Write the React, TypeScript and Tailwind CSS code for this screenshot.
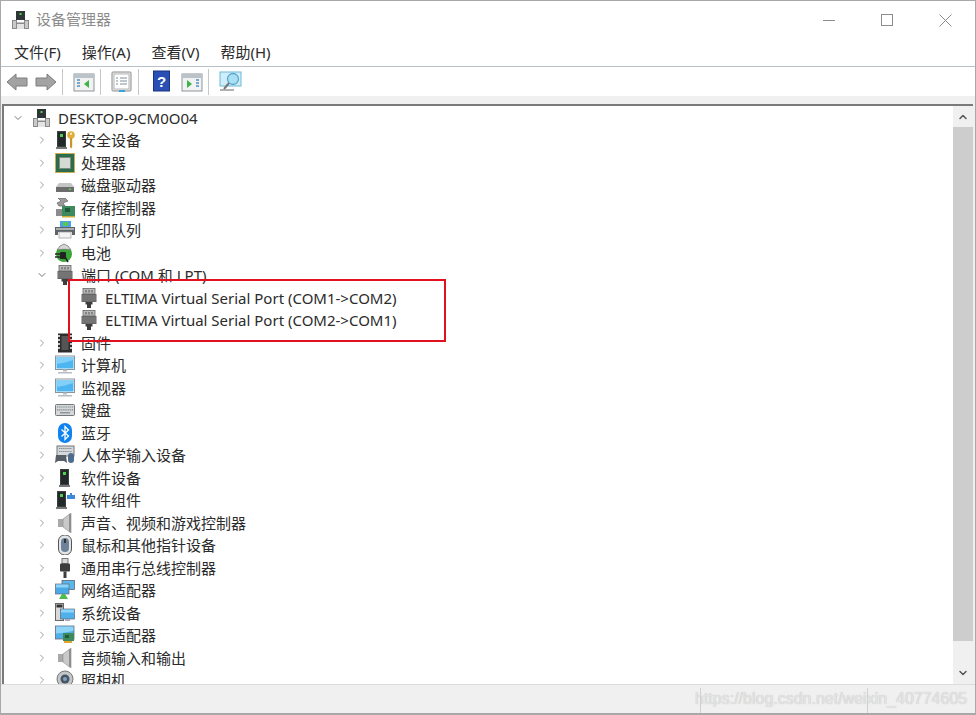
import { ChevronDown, ChevronRight } from "lucide-react";
import type { ReactNode } from "react";

const Svg = ({ children }: { children: ReactNode }) => (
  <svg width="20" height="20" viewBox="0 0 20 20" className="shrink-0">
    {children}
  </svg>
);

const TowerIcon = ({ extra }: { extra?: "key" | "puzzle" }) => {
  const x = extra ? 2 : 5;
  return (
    <Svg>
      <rect x={x} y="1" width="9" height="16" fill="#3a3f42" />
      <rect x={x + 1} y="2" width="7" height="14" fill="#23282b" />
      <rect x={x + 3} y="4" width="3" height="3" fill="#4fd14f" />
      <path d={`M${x - 1} 17h11v2H${x - 1}z`} fill="#777" />
      {extra === "key" && (
        <g>
          <circle cx="16" cy="5" r="3.8" fill="#e0ad3a" />
          <circle cx="16" cy="3.8" r="1.1" fill="#fff5d0" />
          <path d="M15 8h2.2v9l-1.1 1.5-1.1-1.5z" fill="#c9942b" />
        </g>
      )}
      {extra === "puzzle" && <path d="M12 5h3V3h2v2h3v4h-8z" fill="#3b8ad9" />}
    </Svg>
  );
};

const RootIcon = () => (
  <Svg>
    <rect x="6" y="1" width="9" height="9" fill="#2f3437" />
    <rect x="9.5" y="3" width="2" height="2" fill="#4fd14f" />
    <path d="M2 10h5v2.5h7V10h5v9H2z" fill="#8a8a8a" />
    <rect x="3" y="11" width="3" height="7" fill="#c9c9c9" />
    <rect x="15" y="11" width="3" height="7" fill="#c9c9c9" />
    <rect x="7" y="14" width="7" height="5" fill="#e4e4e4" />
  </Svg>
);

const CpuIcon = () => (
  <Svg>
    <rect x="0" y="0" width="20" height="20" fill="#c9b057" />
    <rect x="1" y="1" width="18" height="18" fill="#2e6b4a" />
    <rect x="4.5" y="4.5" width="11" height="11" fill="#d5dad2" stroke="#7a8a80" />
  </Svg>
);

const DiskIcon = () => (
  <Svg>
    <path d="M4 8h12l3 4H1z" fill="#c4c4c4" />
    <rect x="1" y="12" width="18" height="5" fill="#6c6c6c" />
    <rect x="14" y="13.5" width="2" height="1.5" fill="#55d455" />
  </Svg>
);

const StorageIcon = () => (
  <Svg>
    <path d="M3 0h7l3 3-5 2 2 3H4L2 5l4-2z" fill="#9a9a9a" stroke="#555" strokeWidth="0.6" />
    <rect x="1" y="11" width="11" height="7" fill="#8c8c8c" />
    <rect x="7" y="8" width="13" height="10" fill="#3f8a5d" />
    <rect x="10" y="10" width="5" height="4" fill="#1f5a3a" />
    <path d="M7 18h13v1.5H7z" fill="#d1ad41" />
  </Svg>
);

const PrinterIcon = () => (
  <Svg>
    <rect x="5" y="1" width="11" height="6" fill="#4aa3e0" />
    <rect x="8" y="2" width="5" height="4" fill="#5bc45b" />
    <path d="M0 7h20v8h-3v-3H3v3H0z" fill="#5d6468" />
    <rect x="1" y="8" width="18" height="2" fill="#a8adb0" />
    <rect x="4" y="12" width="12" height="6" fill="#f4f4f4" stroke="#999" strokeWidth="0.7" />
  </Svg>
);

const BatteryIcon = () => (
  <Svg>
    <circle cx="9" cy="11" r="8" fill="#3aa63a" />
    <path d="M2 7l3-4 4-2 4 2 3 4c-4-1-10-1-14 0z" fill="#d4d6d4" stroke="#6f6f6f" strokeWidth="0.7" />
    <path d="M0 11h6M0 14h6" stroke="#2a2a2a" strokeWidth="1.5" />
    <rect x="5" y="9" width="6" height="7" rx="1" fill="#222" />
    <path d="M10 14l3 5" stroke="#222" strokeWidth="1.5" />
  </Svg>
);

const PortIcon = () => (
  <Svg>
    <rect x="4" y="0.5" width="12" height="5.5" fill="#b8b8b8" stroke="#666" strokeWidth="0.8" />
    <path d="M7 2v2.5M10 2v2.5M13 2v2.5" stroke="#555" />
    <rect x="2.5" y="6" width="15" height="8" fill="#666" />
    <path d="M3 8h14M3 10h14M3 12h14" stroke="#8a8a8a" strokeWidth="0.8" />
    <path d="M6.5 14h7v2.5h-1.5V20H8v-3.5H6.5z" fill="#3d3d3d" />
  </Svg>
);

const FirmwareIcon = () => (
  <Svg>
    <rect x="3" y="0.5" width="14" height="19" fill="#2d2d2d" />
    <path d="M3 2h2v2H3zM3 6h2v2H3zM3 10h2v2H3zM3 14h2v2H3zM15 2h2v2h-2zM15 6h2v2h-2zM15 10h2v2h-2zM15 14h2v2h-2z" fill="#c7c7c7" />
    <rect x="6.5" y="3" width="7" height="14" fill="#555" />
  </Svg>
);

const MonitorIcon = () => (
  <Svg>
    <rect x="0.5" y="1" width="19" height="13.5" fill="#fff" stroke="#8a949c" />
    <rect x="1.5" y="2" width="17" height="11.5" fill="#4db6f0" />
    <path d="M1.5 2h17v3c-6 2-11 3-17 4z" fill="#82cff7" />
    <path d="M8 14.5h4v2H8zM3 17h14v1.5H3z" fill="#b7bdc2" />
  </Svg>
);

const KeyboardIcon = () => (
  <Svg>
    <rect x="0.5" y="4.5" width="19" height="11" rx="1" fill="#d5d8da" stroke="#777" />
    <path d="M2 7h16M2 9.8h16" stroke="#7d858a" strokeWidth="1.2" strokeDasharray="1.3 0.8" />
    <path d="M5 12.8h10" stroke="#7d858a" strokeWidth="1.2" />
  </Svg>
);

const BluetoothIcon = () => (
  <Svg>
    <rect x="3" y="0" width="14" height="20" rx="7" fill="#0f83f0" />
    <path d="M6.5 6.5l7 6.5-3.5 3.5V3.5L13.5 7l-7 6.5" fill="none" stroke="#fff" strokeWidth="1.3" />
  </Svg>
);

const HidIcon = () => (
  <Svg>
    <rect x="2" y="1" width="17" height="10" fill="#d5d8da" stroke="#777" />
    <path d="M4 3.5h13M4 6.5h13" stroke="#7d858a" strokeDasharray="1.3 0.8" />
    <path d="M0 18l1-8h10l1 8-3-2H3z" fill="#555d66" />
    <rect x="13" y="8" width="6" height="10" rx="3" fill="#4d6d8f" />
  </Svg>
);

const SpeakerIcon = () => (
  <Svg>
    <path d="M3 6h5v8H3z" fill="#a9a9a9" />
    <path d="M8 6l8-6v20l-8-6z" fill="#c9c9c9" stroke="#8a8a8a" strokeWidth="0.6" />
    <path d="M14 1h2v18h-2z" fill="#8f8f8f" />
  </Svg>
);

const MouseIcon = () => (
  <Svg>
    <rect x="3.5" y="0" width="13" height="20" rx="6" fill="#e2e4e6" stroke="#555" />
    <rect x="6" y="3" width="8" height="14" rx="4" fill="#6d8299" />
    <rect x="9" y="4" width="2" height="4" fill="#333" />
  </Svg>
);

const UsbIcon = () => (
  <Svg>
    <rect x="7" y="0.5" width="6" height="5" fill="#d9d9d9" stroke="#777" />
    <rect x="5" y="5.5" width="10" height="8" rx="1" fill="#3d3d3d" />
    <path d="M10 13.5V20" stroke="#3d3d3d" strokeWidth="3" />
  </Svg>
);

const NetworkIcon = () => (
  <Svg>
    <rect x="7" y="0.5" width="12.5" height="9" fill="#5ab5ea" stroke="#556" strokeWidth="0.7" />
    <rect x="0.5" y="4" width="13.5" height="10" fill="#49a9e6" stroke="#667" strokeWidth="0.7" />
    <path d="M1 4.5h12.5v3H1z" fill="#8fd4f7" />
    <path d="M4 19l3-5h3l3 5z" fill="#4dbb4d" />
  </Svg>
);

const SystemIcon = () => (
  <Svg>
    <rect x="0.5" y="0.5" width="8" height="17" fill="#d9d9d9" stroke="#666" />
    <rect x="1.5" y="1.5" width="6" height="3" fill="#333" />
    <rect x="5.5" y="6" width="14" height="10" fill="#4fb0ea" stroke="#667" strokeWidth="0.7" />
    <path d="M6 6.5h13v3H6z" fill="#8fd4f7" />
    <rect x="10" y="16" width="5" height="2" fill="#aab" />
  </Svg>
);

const DisplayAdapterIcon = () => (
  <Svg>
    <rect x="0.5" y="1" width="18.5" height="13" fill="#4fb0ea" stroke="#667" strokeWidth="0.8" />
    <path d="M1 1.5h17.5v4c-6 2-10 2-17.5 3z" fill="#8fd4f7" />
    <rect x="8" y="8" width="11" height="8" fill="#3f8a5d" />
    <rect x="10" y="10" width="4" height="3" fill="#1f5a3a" />
    <rect x="9" y="16" width="8" height="2" fill="#e3a52c" />
  </Svg>
);

const CameraIcon = () => (
  <Svg>
    <circle cx="10" cy="9" r="8" fill="#c4c7ca" stroke="#777" />
    <circle cx="10" cy="9" r="4.5" fill="#4a5560" />
    <circle cx="10" cy="9" r="2" fill="#7ea2c4" />
  </Svg>
);

type TreeRow = { label: string; icon: ReactNode; level: 0 | 1 | 2; open?: boolean; leaf?: boolean };

const rows: TreeRow[] = [
  { label: "DESKTOP-9CM0O04", icon: <RootIcon />, level: 0, open: true },
  { label: "安全设备", icon: <TowerIcon extra="key" />, level: 1 },
  { label: "处理器", icon: <CpuIcon />, level: 1 },
  { label: "磁盘驱动器", icon: <DiskIcon />, level: 1 },
  { label: "存储控制器", icon: <StorageIcon />, level: 1 },
  { label: "打印队列", icon: <PrinterIcon />, level: 1 },
  { label: "电池", icon: <BatteryIcon />, level: 1 },
  { label: "端口 (COM 和 LPT)", icon: <PortIcon />, level: 1, open: true },
  { label: "ELTIMA Virtual Serial Port (COM1->COM2)", icon: <PortIcon />, level: 2, leaf: true },
  { label: "ELTIMA Virtual Serial Port (COM2->COM1)", icon: <PortIcon />, level: 2, leaf: true },
  { label: "固件", icon: <FirmwareIcon />, level: 1 },
  { label: "计算机", icon: <MonitorIcon />, level: 1 },
  { label: "监视器", icon: <MonitorIcon />, level: 1 },
  { label: "键盘", icon: <KeyboardIcon />, level: 1 },
  { label: "蓝牙", icon: <BluetoothIcon />, level: 1 },
  { label: "人体学输入设备", icon: <HidIcon />, level: 1 },
  { label: "软件设备", icon: <TowerIcon />, level: 1 },
  { label: "软件组件", icon: <TowerIcon extra="puzzle" />, level: 1 },
  { label: "声音、视频和游戏控制器", icon: <SpeakerIcon />, level: 1 },
  { label: "鼠标和其他指针设备", icon: <MouseIcon />, level: 1 },
  { label: "通用串行总线控制器", icon: <UsbIcon />, level: 1 },
  { label: "网络适配器", icon: <NetworkIcon />, level: 1 },
  { label: "系统设备", icon: <SystemIcon />, level: 1 },
  { label: "显示适配器", icon: <DisplayAdapterIcon />, level: 1 },
  { label: "音频输入和输出", icon: <SpeakerIcon />, level: 1 },
  { label: "照相机", icon: <CameraIcon />, level: 1 },
];

const levelPad = { 0: "pl-[7px]", 1: "pl-[31px]", 2: "pl-[55px]" };

const menus = ["文件(F)", "操作(A)", "查看(V)", "帮助(H)"];

const Sep = () => <div className="w-px h-[26px] bg-[#c8c8c8] mx-[5px] shrink-0" />;

const Arrow = ({ flip }: { flip?: boolean }) => (
  <svg width="22" height="20" viewBox="0 0 22 20" className={flip ? "-scale-x-100" : ""}>
    <path d="M1 10l9-8v4h11v8H10v4z" fill="#a3a3a3" stroke="#7d7d7d" />
  </svg>
);

const PaneIcon = ({ side }: { side: "left" | "right" }) => (
  <svg width="22" height="20" viewBox="0 0 22 20">
    <rect x="1" y="2" width="20" height="17" fill="#f2f2f2" stroke="#8d9599" />
    <rect x="1" y="2" width="20" height="4" fill="#b9c3c9" />
    {side === "left" ? (
      <>
        <path d="M4 8h3M4 11h3M4 14h3" stroke="#4a90c9" strokeWidth="1.5" />
        <path d="M16 8v8l-5-4z" fill="#3cb44a" />
      </>
    ) : (
      <>
        <path d="M15 8h3M15 11h3M15 14h3" stroke="#4a90c9" strokeWidth="1.5" />
        <path d="M6 8v8l5-4z" fill="#3cb44a" />
      </>
    )}
  </svg>
);

const SheetIcon = () => (
  <svg width="22" height="24" viewBox="0 0 22 24">
    <rect x="1" y="2" width="19" height="19" rx="1" fill="#ececec" stroke="#8d8d8d" />
    <rect x="3" y="4" width="15" height="15" fill="#fff" stroke="#b5b5b5" />
    <path d="M5 8h2M9 8h7M5 11h2M9 11h7M5 14h2M9 14h7" stroke="#7c8fa0" />
    <rect x="8" y="20" width="6" height="2" fill="#3aa0e0" />
  </svg>
);

const HelpIcon = () => (
  <svg width="18" height="24" viewBox="0 0 18 24">
    <rect x="0.5" y="1" width="16" height="20" fill="#2a50b5" stroke="#1b357f" />
    <text x="8.5" y="17" textAnchor="middle" fontSize="15" fontWeight="700" fill="#fff" fontFamily="Liberation Sans, sans-serif">?</text>
  </svg>
);

const ScanIcon = () => (
  <svg width="24" height="22" viewBox="0 0 24 22">
    <rect x="1" y="1" width="21" height="14" fill="#cfeefb" stroke="#6fb8d8" />
    <circle cx="14" cy="8" r="5.5" fill="#a9e0f5" stroke="#5aa6c8" strokeWidth="1.3" />
    <path d="M10 12l-5 6" stroke="#777" strokeWidth="2" />
    <path d="M1 19h14" stroke="#999" strokeWidth="1.5" />
  </svg>
);

export default function App() {
  return (
    <div
      className="relative w-[976px] h-[715px] flex flex-col overflow-hidden bg-white border border-[#a8a8a8] border-b-2 text-[#2b2b2b] text-[15px]"
      style={{ fontFamily: '"Noto Sans", "Noto Sans CJK SC", sans-serif' }}
    >
      {/* title bar */}
      <div className="h-[37px] flex items-center shrink-0">
        <div className="ml-[9px]">
          <RootIcon />
        </div>
        <span className="ml-[6px] text-[#8c8c8c]">设备管理器</span>
        <div className="ml-auto mt-[1px] flex items-center gap-[46px] mr-[23px]">
          <div className="w-3 h-px bg-[#8c8c8c]" />
          <div className="w-3 h-3 border border-[#8c8c8c]" />
          <svg width="13" height="13" viewBox="0 0 13 13">
            <path d="M0.5 0.5l12 12M12.5 0.5l-12 12" stroke="#8c8c8c" />
          </svg>
        </div>
      </div>

      {/* menu bar */}
      <div className="h-[29px] flex items-center gap-[21px] pl-[13px] pt-[1px] shrink-0 border-b border-[#b8c0c6]">
        {menus.map((m) => (
          <span key={m}>{m}</span>
        ))}
      </div>

      {/* toolbar */}
      <div className="h-[29px] flex items-center pl-[5px] pt-[1px] shrink-0">
        <Arrow />
        <div className="w-[7px]" />
        <Arrow flip />
        <Sep />
        <div className="w-[5px]" />
        <PaneIcon side="left" />
        <Sep />
        <div className="w-[5px]" />
        <SheetIcon />
        <Sep />
        <div className="w-[9px]" />
        <HelpIcon />
        <div className="w-[10px]" />
        <PaneIcon side="right" />
        <Sep />
        <div className="w-[5px]" />
        <ScanIcon />
      </div>

      {/* tree + scrollbar */}
      <div className="flex-1 min-h-0 bg-[#f0f0f0] pt-[8px]">
        <div className="h-full flex border-t-2 border-l-2 border-[#7a7a7a] ml-px mr-[2px]">
          <div className="flex-1 min-w-0 overflow-hidden bg-white pt-[0.5px]">
            {rows.map((r) => (
              <div key={r.label} className={`h-[22.5px] flex items-center whitespace-nowrap ${levelPad[r.level]}`}>
                <div className="w-[14px] h-[14px] flex items-center justify-center shrink-0 text-[#777]">
                  {!r.leaf &&
                    (r.open ? (
                      <ChevronDown size={12} strokeWidth={2} />
                    ) : (
                      <ChevronRight size={12} strokeWidth={2} className="text-[#a0a0a0]" />
                    ))}
                </div>
                <div className="ml-[6px] w-5 shrink-0 flex justify-center">{r.icon}</div>
                <span className={r.level === 0 ? "ml-[7px]" : "ml-[6px]"}>{r.label}</span>
              </div>
            ))}
          </div>
          <div className="w-[20px] shrink-0 flex flex-col bg-[#f0f0f0]">
            <div className="h-[21px] flex items-center justify-center text-[#555]">
              <ChevronDown size={12} strokeWidth={3} className="rotate-180" />
            </div>
            <div className="h-[514px] bg-[#cdcdcd]" />
            <div className="flex-1 flex items-end justify-center pb-[5px] text-[#555]">
              <ChevronDown size={12} strokeWidth={3} />
            </div>
          </div>
        </div>
      </div>

      {/* status bar */}
      <div className="h-[29px] shrink-0 flex bg-[#f0f0f0] border-t border-[#dcdcdc] pr-[1px]">
        <div className="flex-1" />
        <div className="w-[167px] border-l border-[#d0d0d0] mt-[3px]" />
        <div className="w-[107px] border-l border-[#d0d0d0] mt-[3px]" />
      </div>

      {/* annotation and watermark sit on top of the window */}
      <div className="absolute left-[67px] top-[278px] w-[378px] h-[63px] border-2 border-[#e0121f]" />
      <span
        className="absolute left-[694px] top-[686px] text-[16px] text-[#e4e4e4] whitespace-nowrap [text-shadow:0_0_1px_#b8b8b8]"
        style={{ fontFamily: '"Liberation Sans", sans-serif' }}
      >
        https://blog.csdn.net/weixin_40774605
      </span>
    </div>
  );
}
